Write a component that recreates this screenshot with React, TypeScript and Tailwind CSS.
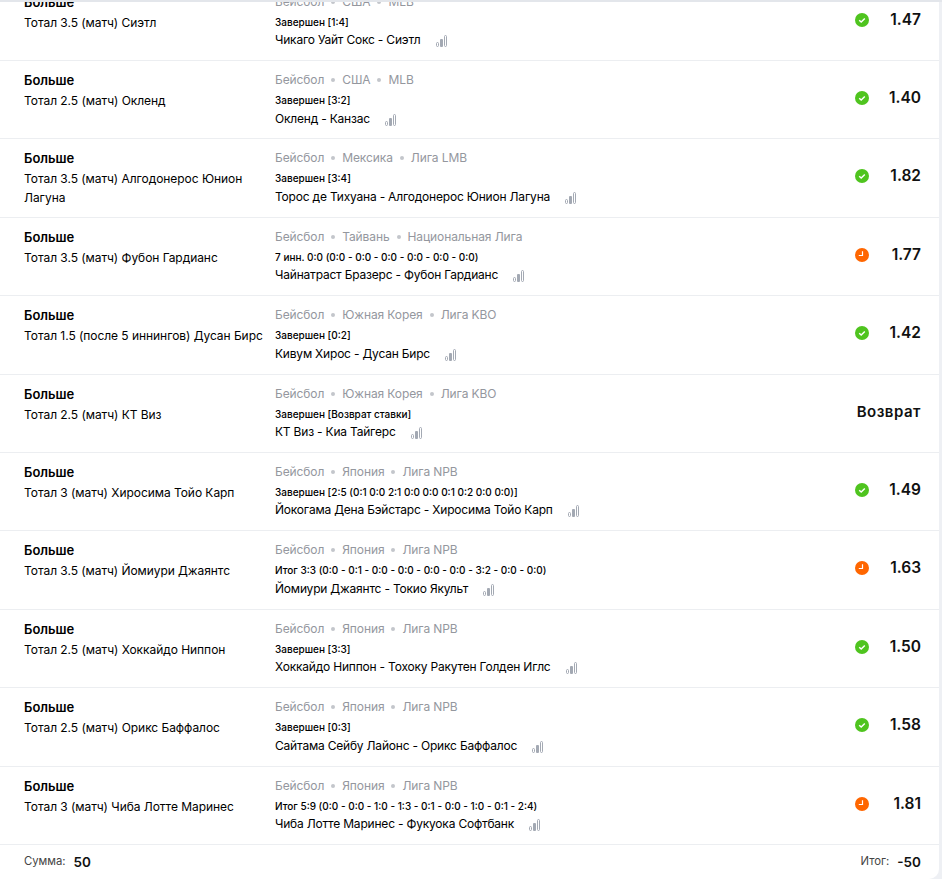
type Bet = {
  total: string;
  country: string;
  league: string;
  status: string;
  teams: string;
  odds?: string;
  result: "win" | "pending" | "refund";
};

const bets: Bet[] = [
  { total: "Тотал 3.5 (матч) Сиэтл", country: "США", league: "MLB", status: "Завершен [1:4]", teams: "Чикаго Уайт Сокс - Сиэтл", odds: "1.47", result: "win" },
  { total: "Тотал 2.5 (матч) Окленд", country: "США", league: "MLB", status: "Завершен [3:2]", teams: "Окленд - Канзас", odds: "1.40", result: "win" },
  { total: "Тотал 3.5 (матч) Алгодонерос Юнион Лагуна", country: "Мексика", league: "Лига LMB", status: "Завершен [3:4]", teams: "Торос де Тихуана - Алгодонерос Юнион Лагуна", odds: "1.82", result: "win" },
  { total: "Тотал 3.5 (матч) Фубон Гардианс", country: "Тайвань", league: "Национальная Лига", status: "7 инн. 0:0 (0:0 - 0:0 - 0:0 - 0:0 - 0:0 - 0:0)", teams: "Чайнатраст Бразерс - Фубон Гардианс", odds: "1.77", result: "pending" },
  { total: "Тотал 1.5 (после 5 иннингов) Дусан Бирс", country: "Южная Корея", league: "Лига KBO", status: "Завершен [0:2]", teams: "Кивум Хирос - Дусан Бирс", odds: "1.42", result: "win" },
  { total: "Тотал 2.5 (матч) КТ Виз", country: "Южная Корея", league: "Лига KBO", status: "Завершен [Возврат ставки]", teams: "КТ Виз - Киа Тайгерс", result: "refund" },
  { total: "Тотал 3 (матч) Хиросима Тойо Карп", country: "Япония", league: "Лига NPB", status: "Завершен [2:5 (0:1 0:0 2:1 0:0 0:0 0:1 0:2 0:0 0:0)]", teams: "Йокогама Дена Бэйстарс - Хиросима Тойо Карп", odds: "1.49", result: "win" },
  { total: "Тотал 3.5 (матч) Йомиури Джаянтс", country: "Япония", league: "Лига NPB", status: "Итог 3:3 (0:0 - 0:1 - 0:0 - 0:0 - 0:0 - 0:0 - 3:2 - 0:0 - 0:0)", teams: "Йомиури Джаянтс - Токио Якульт", odds: "1.63", result: "pending" },
  { total: "Тотал 2.5 (матч) Хоккайдо Ниппон", country: "Япония", league: "Лига NPB", status: "Завершен [3:3]", teams: "Хоккайдо Ниппон - Тохоку Ракутен Голден Иглс", odds: "1.50", result: "win" },
  { total: "Тотал 2.5 (матч) Орикс Баффалос", country: "Япония", league: "Лига NPB", status: "Завершен [0:3]", teams: "Сайтама Сейбу Лайонс - Орикс Баффалос", odds: "1.58", result: "win" },
  { total: "Тотал 3 (матч) Чиба Лотте Маринес", country: "Япония", league: "Лига NPB", status: "Итог 5:9 (0:0 - 0:0 - 1:0 - 1:3 - 0:1 - 0:0 - 1:0 - 0:1 - 2:4)", teams: "Чиба Лотте Маринес - Фукуока Софтбанк", odds: "1.81", result: "pending" },
];

function StatsIcon() {
  return (
    <svg width="11" height="12" viewBox="0 0 11 12" className="ml-[15px] shrink-0 mt-[2px]">
      <rect x="0.5" y="7.5" width="2" height="4" rx="1" fill="none" stroke="#a3a9b3" />
      <rect x="4" y="4" width="3" height="8" rx="1" fill="#a3a9b3" />
      <rect x="8.5" y="0.5" width="2" height="11" rx="1" fill="none" stroke="#a3a9b3" />
    </svg>
  );
}

function StatusIcon({ result }: { result: Bet["result"] }) {
  if (result === "win") {
    return (
      <svg width="14" height="14" viewBox="0 0 14 14">
        <circle cx="7" cy="7" r="7" fill="#4fc41f" />
        <path d="M4.2 7.2l2 1.9 3.6-3.7" fill="none" stroke="#fff" strokeWidth="1.4" />
      </svg>
    );
  }
  return (
    <svg width="14" height="14" viewBox="0 0 14 14">
      <circle cx="7" cy="7" r="7" fill="#ff6600" />
      <path d="M7.5 3.2v4.3H3.8" fill="none" stroke="#fff" strokeWidth="1.2" />
    </svg>
  );
}

function BetRow({ bet }: { bet: Bet }) {
  return (
    <div className="flex h-[78.4px] border-b border-[#eceef1] box-border">
      <div className="w-[275px] shrink-0 pl-6 pr-[10px] pt-[10px]">
        <div className="text-[13px] leading-[18px] font-semibold text-black">Больше</div>
        <div className="text-[12px] leading-[19px] text-black mt-[2px] tracking-[-0.05px]">{bet.total}</div>
      </div>
      <div className="flex-1 pt-[10px]">
        <div className="flex items-center text-[12px] leading-[18px] text-[#94979e] tracking-[-0.1px]">
          <span>Бейсбол</span>
          <span className="mx-[7px] w-1 h-1 rounded-full bg-[#c3c6cb]" />
          <span>{bet.country}</span>
          <span className="mx-[7px] w-1 h-1 rounded-full bg-[#c3c6cb]" />
          <span>{bet.league}</span>
        </div>
        <div className="text-[10px] leading-[18px] font-medium text-black mt-[2px]">{bet.status}</div>
        <div className="flex items-center text-[12px] leading-[18px] text-black tracking-[-0.2px] mt-[0.5px]">
          <span>{bet.teams}</span>
          <StatsIcon />
        </div>
      </div>
      {bet.result === "refund" ? (
        <div className="w-[120px] pr-[18px] pt-[27px] text-right text-[15px] leading-[20px] font-semibold text-[#111] tracking-[0.5px]">
          Возврат
        </div>
      ) : (
        <div className="flex w-[84px] pr-[18px] pt-[30px] justify-between">
          <StatusIcon result={bet.result} />
          <div className="text-[15.5px] leading-[14px] font-semibold text-[#111]">{bet.odds}</div>
        </div>
      )}
    </div>
  );
}

export default function App() {
  return (
    <div className="h-[879px] overflow-hidden bg-[#eef0f4] font-['Inter',sans-serif] relative">
      <div className="absolute top-0 left-0 right-0 h-[2px] bg-[#e3e6eb] z-10" />
      <div className="mt-[-17.4px] w-[939px] bg-white rounded-br-[10px]">
        {bets.map((bet) => (
          <BetRow key={bet.teams} bet={bet} />
        ))}
        <div className="flex h-[34px] items-center justify-between pl-6 pr-[18px]">
          <div className="flex items-center">
            <span className="text-[11.3px] text-[#444]">Сумма:</span>
            <span className="ml-2 text-[13.5px] font-semibold text-[#111]">50</span>
          </div>
          <div className="flex items-center">
            <span className="text-[11.3px] text-[#444]">Итог:</span>
            <span className="ml-2 text-[13.5px] font-semibold text-[#111]">-50</span>
          </div>
        </div>
      </div>
    </div>
  );
}
